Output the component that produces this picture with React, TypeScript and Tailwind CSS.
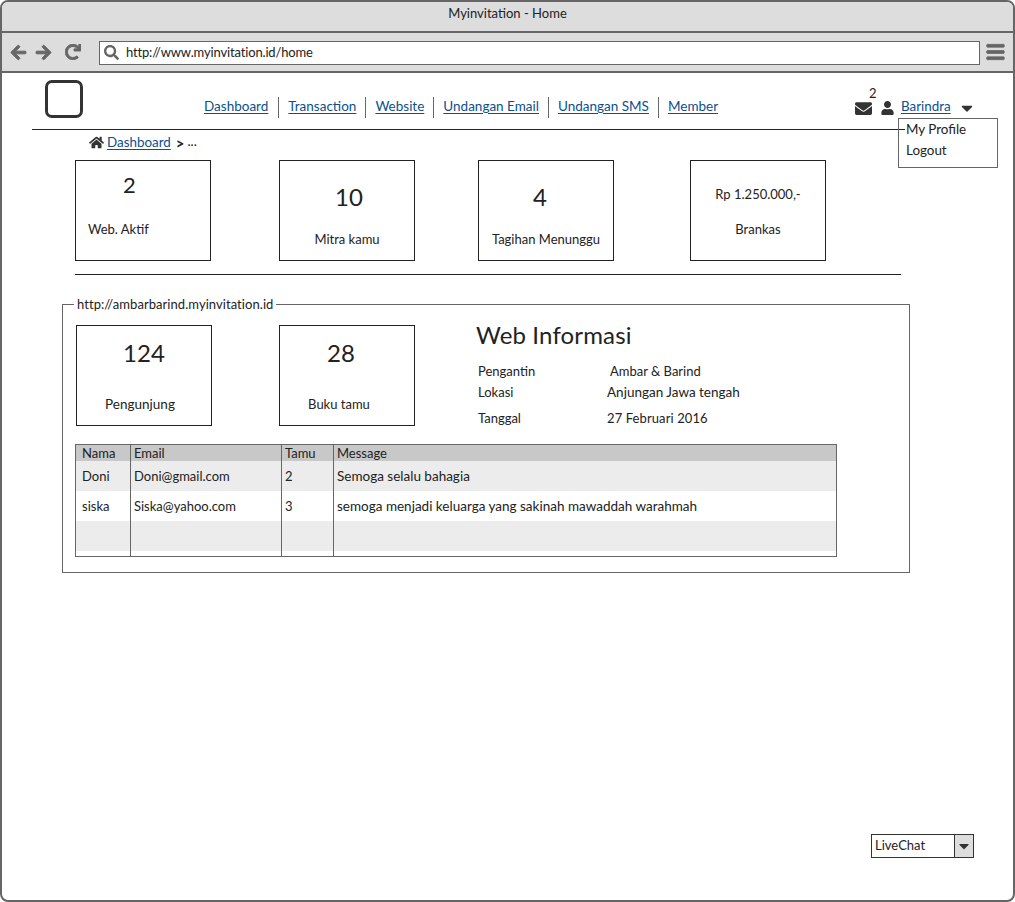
import React from 'react';
import { FaArrowLeft, FaArrowRight, FaBars, FaCaretDown, FaEnvelope, FaHome, FaRedo, FaSearch, FaUser } from 'react-icons/fa';

const navItems = ['Dashboard', 'Transaction', 'Website', 'Undangan Email', 'Undangan SMS', 'Member'];

const guests = [
  { nama: 'Doni', email: 'Doni@gmail.com', tamu: '2', message: 'Semoga selalu bahagia' },
  { nama: 'siska', email: 'Siska@yahoo.com', tamu: '3', message: 'semoga menjadi keluarga yang sakinah mawaddah warahmah' },
  { nama: '', email: '', tamu: '', message: '' },
];

export default function App() {
  return (
    <div className="w-[1015px] h-[902px] overflow-hidden bg-white border-2 border-[#666666] rounded-[8px] text-[13px] text-[#222222] font-['Lato',sans-serif]">
      {/* Browser chrome */}
      <div className="h-[30px] bg-[#dddddd] border-b-2 border-[#666666] box-content flex items-center justify-center text-[13px] -mt-px pb-0">
        <span className="-mt-[4px]">Myinvitation - Home</span>
      </div>
      <div className="h-[38px] bg-[#dddddd] border-b-2 border-[#666666] flex items-center pl-[8px] pr-[8px] box-content">
        <FaArrowLeft className="w-[17px] h-[17px] text-[#666666] stroke-current stroke-[30]" />
        <FaArrowRight className="w-[17px] h-[17px] text-[#666666] ml-[8px] stroke-current stroke-[30]" />
        <FaRedo className="w-[16px] h-[16px] text-[#666666] ml-[13px] stroke-current stroke-[30]" />
        <div className="ml-[18px] mt-[1px] w-[883px] h-[24px] bg-white border border-[#666666] flex items-center pl-[4px]">
          <FaSearch className="w-[15px] h-[15px] text-[#666666]" />
          <span className="ml-[7px] text-[13px] tracking-[-0.15px]">http://www.myinvitation.id/home</span>
        </div>
        <FaBars className="w-[19px] h-[20px] text-[#666666] ml-[6px] stroke-current stroke-[20]" />
      </div>

      {/* Header */}
      <div className="relative ml-[30px] w-[873px] h-[57px] border-b border-[#222222] flex items-end">
        <div className="ml-[13px] mb-[11px] w-[38px] h-[38px] border-[3px] border-[#333333] rounded-[7px]" />
        <nav className="ml-[121px] mb-[11px] flex items-center">
          {navItems.map((item, i) => (
            <div key={item} className={i === 0 ? 'h-[21px] flex items-center pr-[10px] pb-[3px]' : 'h-[21px] flex items-center px-[9px] pb-[3px] border-l border-[#666666]'}>
              <a className="text-[#0b4f8f] underline underline-offset-2 text-[13.5px]">{item}</a>
            </div>
          ))}
        </nav>
      </div>

      {/* User menu */}
      <div className="relative">
        <div className="absolute left-[853px] top-[-31px] flex items-center">
          <div className="relative">
            <FaEnvelope className="w-[17px] h-[17px] text-[#333333]" />
            <span className="absolute left-[14px] top-[-16px] text-[13px]">2</span>
          </div>
          <FaUser className="w-[13px] h-[14px] text-[#333333] ml-[9px]" />
          <a className="ml-[7px] text-[#0b4f8f] underline underline-offset-2 text-[13.4px] -mt-[3px]">Barindra</a>
          <FaCaretDown className="w-[18px] h-[18px] text-[#333333] ml-[7px]" />
        </div>
        <div className="absolute left-[896px] top-[-12px] w-[100px] h-[50px] border border-[#666666] pl-[7px] leading-[21px] text-[13.4px]">
          <div>My Profile</div>
          <div>Logout</div>
        </div>
      </div>

      {/* Breadcrumb */}
      <div className="ml-[87px] mt-[2px] h-[20px] flex items-center">
        <FaHome className="w-[15px] h-[15px] text-[#333333]" />
        <a className="ml-[3px] text-[#0b4f8f] underline underline-offset-2 text-[13.4px]">Dashboard</a>
        <span className="ml-[5px] text-[15px] font-bold leading-[20px] mt-[2px]">&gt;</span>
        <span className="ml-[3px]">...</span>
      </div>

      {/* Summary cards */}
      <div className="ml-[73px] mt-[8px] flex">
        <div className="w-[136px] h-[101px] border border-[#222222]">
          <div className="ml-[47px] mt-[10px] text-[22px] leading-[28px]">2</div>
          <div className="ml-[12px] mt-[20px] leading-[20px]">Web. Aktif</div>
        </div>
        <div className="ml-[68px] w-[136px] h-[101px] border border-[#222222] text-center">
          <div className="mt-[21px] pl-[4px] text-[24px] leading-[30px]">10</div>
          <div className="mt-[17px] leading-[20px]">Mitra kamu</div>
        </div>
        <div className="ml-[63px] w-[136px] h-[101px] border border-[#222222] text-center">
          <div className="mt-[21px] pr-[12px] text-[24px] leading-[30px]">4</div>
          <div className="mt-[17px] leading-[20px]">Tagihan Menunggu</div>
        </div>
        <div className="ml-[76px] w-[136px] h-[101px] border border-[#222222] text-center">
          <div className="mt-[23px] leading-[20px]">Rp 1.250.000,-</div>
          <div className="mt-[15px] leading-[20px]">Brankas</div>
        </div>
      </div>

      <div className="ml-[73px] mt-[13px] w-[826px] border-t border-[#222222]" />

      {/* Web panel */}
      <fieldset className="ml-[60px] mt-[21px] w-[848px] h-[277px] border border-[#666666] px-[13px] pt-0">
        <legend className="-ml-[2px] px-[3px] leading-[16px] tracking-[0.06px]">http://ambarbarind.myinvitation.id</legend>
        <div className="flex mt-[13px]">
          <div className="w-[136px] h-[101px] border border-[#222222] text-center">
            <div className="mt-[12px] text-[24px] leading-[30px]">124</div>
            <div className="mt-[26px] pr-[8px] text-[13.5px] leading-[20px]">Pengunjung</div>
          </div>
          <div className="ml-[67px] w-[136px] h-[101px] border border-[#222222] text-center">
            <div className="mt-[12px] pr-[12px] text-[24px] leading-[30px]">28</div>
            <div className="mt-[26px] pr-[16px] leading-[20px]">Buku tamu</div>
          </div>
          <div className="ml-[61px]">
            <div className="text-[24px] leading-[30px] tracking-[0.15px] -mt-[5px]">Web Informasi</div>
            <div className="mt-[11px] grid grid-cols-[129px_auto] ml-[2px] leading-[21px]">
              <div>Pengantin</div>
              <div className="ml-[3px]">Ambar &amp; Barind</div>
              <div>Lokasi</div>
              <div className="text-[13.5px]">Anjungan Jawa tengah</div>
              <div className="mt-[5px]">Tanggal</div>
              <div className="mt-[5px] tracking-[0.1px]">27 Februari 2016</div>
            </div>
          </div>
        </div>

        <table className="mt-[15px] -ml-px w-[762px] h-[113px] border border-[#666666] table-fixed border-collapse text-[13px]">
          <colgroup>
            <col className="w-[55px]" />
            <col className="w-[151px]" />
            <col className="w-[52px]" />
            <col />
          </colgroup>
          <thead>
            <tr className="h-[16px] bg-[#c8c8c8] text-left leading-[16px]">
              <th className="font-normal pl-[6px] border-l border-[#666666]">Nama</th>
              <th className="font-normal pl-[3px] border-l border-[#666666]">Email</th>
              <th className="font-normal pl-[3px] border-l border-[#666666]">Tamu</th>
              <th className="font-normal pl-[3px] border-l border-[#666666]">Message</th>
            </tr>
          </thead>
          <tbody>
            {guests.map((g, i) => (
              <tr key={i} className={i % 2 === 0 ? 'h-[30px] bg-[#ececec]' : 'h-[30px] bg-white'}>
                <td className="pl-[6px] pt-[2px] border-l border-[#666666]">{g.nama}</td>
                <td className="pl-[3px] pt-[2px] border-l border-[#666666]">{g.email}</td>
                <td className="pl-[3px] pt-[2px] border-l border-[#666666]">{g.tamu}</td>
                <td className="pl-[3px] border-l border-[#666666] text-[13.5px]">{g.message}</td>
              </tr>
            ))}
            <tr className="h-[5px]">
              <td className="border-l border-[#666666]" />
              <td className="border-l border-[#666666]" />
              <td className="border-l border-[#666666]" />
              <td className="border-l border-[#666666]" />
            </tr>
          </tbody>
        </table>
      </fieldset>

      {/* LiveChat select */}
      <div className="ml-[869px] mt-[261px] w-[103px] h-[24px] border border-[#333333] flex">
        <div className="flex-1 pl-[3px] leading-[20px]">LiveChat</div>
        <div className="w-[19px] bg-[#dddddd] border-l border-[#333333] flex items-center justify-center">
          <FaCaretDown className="w-[16px] h-[16px] text-[#333333]" />
        </div>
      </div>
    </div>
  );
}
